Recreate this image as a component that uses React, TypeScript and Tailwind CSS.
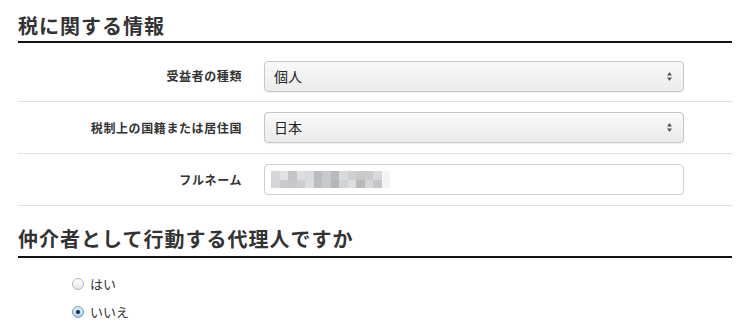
import React from "react";

const font = { fontFamily: '"Noto Sans CJK JP", "Noto Sans", sans-serif' };

const pix = [
  ["#d4d6da", "#e0e1e3", "#c2c4c7", "#dcdddf", "#d8d9db", "#b9bcc0", "#c6c8cb", "#b7babe", "#d9dadc", "#cfd0d2", "#c8c9cb", "#cacbcd", "#d6d8db", "#f4f4f5"],
  ["#d3d5d9", "#c9cacc", "#c6c7c9", "#cdcecf", "#dcdddf", "#babdc1", "#c7c8ca", "#b4b7ba", "#d2d3d5", "#dddedf", "#b8b9bb", "#d4d5d6", "#c4c5c8", "#f4f4f5"],
];

function Arrows() {
  return (
    <svg width="7" height="11" viewBox="0 0 7 11" className="mr-[10px]">
      <path d="M3.5 1 L6 4.5 L1 4.5 Z" fill="#555" />
      <path d="M3.5 10 L6 6.5 L1 6.5 Z" fill="#555" />
    </svg>
  );
}

function Select({ value }: { value: string }) {
  return (
    <div className="flex h-[31px] w-[420px] items-center justify-between rounded-[4px] border border-[#c6c6c6] bg-gradient-to-b from-[#fafafa] to-[#ebebeb] pl-[9px] text-[14px] text-[#222] shadow-[0_1px_1px_rgba(0,0,0,0.06)]">
      <span>{value}</span>
      <Arrows />
    </div>
  );
}

function Row({ label, children, h }: { label: string; children: React.ReactNode; h: string }) {
  return (
    <div className={`flex items-center border-b border-[#dedede] ${h}`}>
      <div className="w-[225px] pr-[1px] text-right text-[12px] font-bold tracking-[0.6px] text-[#333]">{label}</div>
      <div className="pl-[21px]">{children}</div>
    </div>
  );
}

export default function App() {
  return (
    <div style={font} className="h-[333px] w-[750px] overflow-hidden bg-white px-[18px] text-[#333]">
      <h2 className="flex h-[43px] items-end border-b-2 border-[#111] pb-[5px] text-[20px] font-bold leading-none tracking-[1px] text-[#333]">
        税に関する情報
      </h2>
      <div className="mt-[8px]">
        <Row label="受益者の種類" h="h-[51px]">
          <Select value="個人" />
        </Row>
        <Row label="税制上の国籍または居住国" h="h-[52px]">
          <Select value="日本" />
        </Row>
        <Row label="フルネーム" h="h-[52px]">
          <div className="flex h-[31px] w-[420px] items-center rounded-[4px] border border-[#cfcfcf] bg-white pl-[6px]">
            <div className="flex flex-col">
              {pix.map((r, i) => (
                <div key={i} className="flex">
                  {r.map((c, j) => (
                    <div key={j} className="h-[8.5px] w-[8.5px]" style={{ background: c }} />
                  ))}
                </div>
              ))}
            </div>
          </div>
        </Row>
      </div>
      <h2 className="flex h-[52px] items-end border-b-2 border-[#111] pb-[7px] text-[20px] font-bold leading-none tracking-[1px] text-[#333]">
        仲介者として行動する代理人ですか
      </h2>
      <div className="ml-[54px] mt-[18px] flex flex-col gap-[12px] text-[13px] text-[#333]">
        <label className="flex h-[16px] items-center gap-[6px]">
          <span className="inline-block h-[12px] w-[12px] rounded-full border border-[#b5b5b5] bg-gradient-to-b from-[#ffffff] to-[#e6e6e6]" />
          <span>はい</span>
        </label>
        <label className="flex h-[16px] items-center gap-[6px]">
          <span className="flex h-[12px] w-[12px] items-center justify-center rounded-full border border-[#6e9ad1] bg-gradient-to-b from-[#e6f0fb] to-[#aecdf0]">
            <span className="h-[4px] w-[4px] rounded-full bg-[#1c2a3a]" />
          </span>
          <span>いいえ</span>
        </label>
      </div>
    </div>
  );
}
